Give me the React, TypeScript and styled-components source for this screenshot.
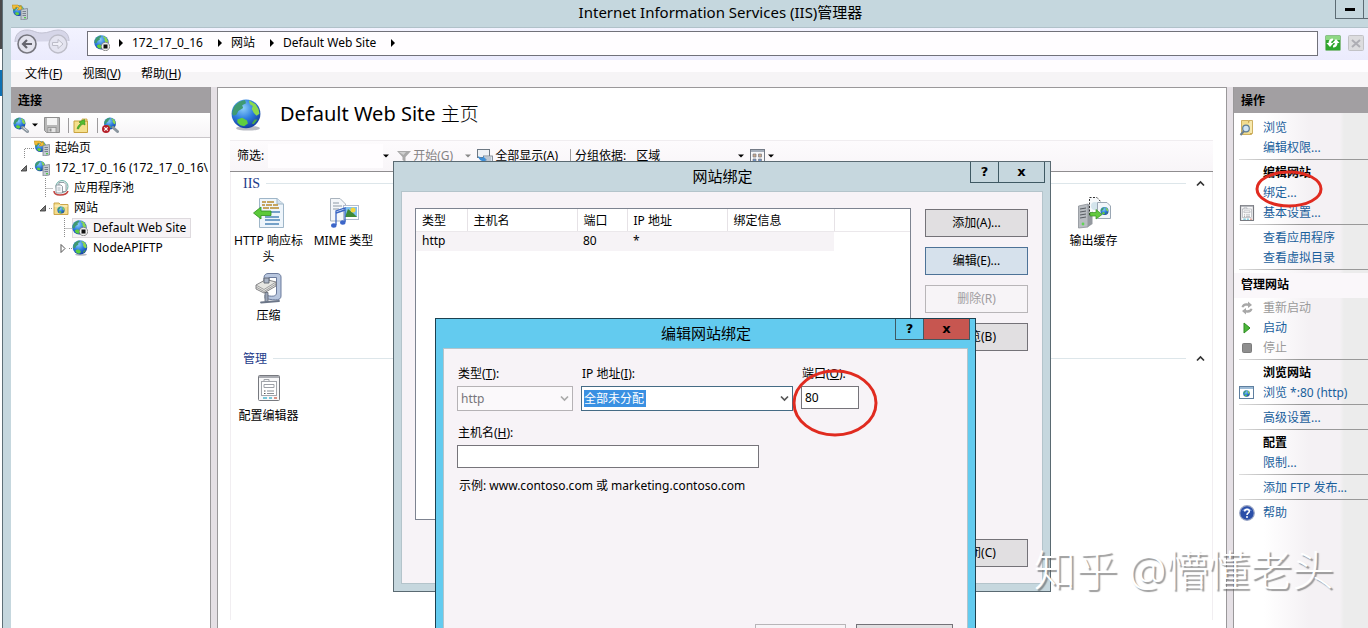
import React, { useId } from "react";
import styled, { createGlobalStyle, css } from "styled-components";

const GlobalStyle = createGlobalStyle`
  *, *::before, *::after { box-sizing: border-box; }
  body {
    margin: 0;
    overflow: hidden;
    color: #000;
    font: 12px/16px "Noto Sans", "Noto Sans CJK SC", sans-serif;
  }
  button, input, select { font: inherit; color: inherit; margin: 0; }
  a { color: #1a5f9c; text-decoration: none; }
  svg { display: block; flex: none; }
  h1, h2, h3, ul { margin: 0; padding: 0; font: inherit; }
`;

/* ---------- Icons ---------- */

function GlobeShape({ cx = 8, cy = 8, r = 7 }: { cx?: number; cy?: number; r?: number }) {
  const id = useId();
  const s = r / 15;
  return (
    <g>
      <defs>
        <radialGradient id={id} cx="0.4" cy="0.3" r="0.75">
          <stop offset="0" stopColor="#8fd0fa" />
          <stop offset="0.5" stopColor="#2f7fe0" />
          <stop offset="1" stopColor="#12389c" />
        </radialGradient>
      </defs>
      <circle cx={cx} cy={cy} r={r} fill={`url(#${id})`} />
      <g transform={`translate(${cx} ${cy}) scale(${s})`} fill="#4aa848">
        <path d="M-12-8C-9-12-5-14-1-14.5L0-11-4-9-3-6-8-3-10 1-13 2-14.5 0C-14-4-13-6-12-8Z" fill="#3f9a72" />
        <path d="M3-14 10-10 13-5 14 0 11 2 8-1 6-5 7-8 4-10Z" fill="#8ad84e" />
        <path d="M-9 6-4 4 1 7 2 10-2 13-6 12-9 9Z" fill="#5fce3e" />
        <path d="M9 6 12 6 8 11 6 10Z" />
      </g>
    </g>
  );
}

const Globe = ({ size = 16 }: { size?: number }) => (
  <svg width={size} height={size} viewBox="0 0 16 16">
    <ellipse cx="9" cy="14.6" rx="6" ry="1.2" fill="#b9bcc4" />
    <GlobeShape r={7.2} cy={7.4} />
  </svg>
);

const SiteIcon = () => (
  <svg width="16" height="16" viewBox="0 0 16 16">
    <GlobeShape r={7.2} cx={7.4} cy={7.4} />
    <circle cx="11.5" cy="11.5" r="4.2" fill="#eee" stroke="#777" strokeWidth="0.8" />
    <rect x="9.5" y="9.5" width="4" height="4" fill="#111" />
  </svg>
);

const ServerTower = () => (
  <g>
    <path d="M9 5.5 15.5 4.5V15L9 16Z" fill="#c3cad2" stroke="#7d8790" strokeWidth="0.8" />
    <path d="M10.5 7.5h3.5M10.5 9.5h3.5M10.5 11.5h3.5" stroke="#66717b" strokeWidth="0.8" />
    <rect x="12" y="13" width="2" height="1.3" fill="#54c94a" />
  </g>
);

const StartIcon = () => (
  <svg width="16" height="16" viewBox="0 0 16 16">
    <GlobeShape cx={6.5} cy={6.5} r={5.5} />
    <path d="M0 1h6l2 2 1-2 1 5-5 0 2-2-3-1-1 2H1Z" fill="#f0bd3a" stroke="#b98512" strokeWidth="0.5" />
    <ServerTower />
  </svg>
);

const ServerIcon = () => (
  <svg width="16" height="16" viewBox="0 0 16 16">
    <GlobeShape cx={6} cy={6} r={5.2} />
    <ServerTower />
  </svg>
);

const PoolIcon = () => (
  <svg width="16" height="16" viewBox="0 0 16 16">
    <circle cx="9" cy="6.5" r="6" fill="#dff0ee" stroke="#6fb0a6" />
    <path d="M6 2.5h5l2 2v7H6Z" fill="#fff" stroke="#7c8790" strokeWidth="0.8" />
    <path d="M3 5h5l1.500 1.500V13H3Z" fill="#f6f8fa" stroke="#7c8790" strokeWidth="0.8" />
    <path d="M4.500 8h3M4.500 10h3" stroke="#9aa4ac" strokeWidth="0.8" />
    <path d="M1 11c0 3 3 4 6 4s7-1 8-4" fill="none" stroke="#c0433f" strokeWidth="1.500" />
  </svg>
);

const FolderGlobe = () => (
  <svg width="16" height="16" viewBox="0 0 16 16">
    <path d="M1 3h5l1.500 1.500H15V14.500H1Z" fill="#f3dc8c" stroke="#c79e3b" strokeWidth="0.9" />
    <path d="M1.500 6h13" stroke="#fff6cf" />
    <GlobeShape cx={8} cy={10} r={3.6} />
  </svg>
);

const ConnectIcon = () => (
  <svg width="17" height="16" viewBox="0 0 17 16">
    <GlobeShape cx={6.500} cy={6.500} r={6} />
    <path d="M9.500 10.500 14.500 14.500" stroke="#8a959e" strokeWidth="3" strokeLinecap="round" />
    <path d="M10 10.500 14.500 14" stroke="#dfe5ea" strokeWidth="1" />
  </svg>
);

const DisconnectIcon = () => (
  <svg width="17" height="16" viewBox="0 0 17 16">
    <GlobeShape cx={8} cy={6.500} r={6} />
    <path d="M11 10.500 15.500 14.500" stroke="#8a959e" strokeWidth="3" strokeLinecap="round" />
    <circle cx="4" cy="12" r="4" fill="#b5202a" />
    <path d="M2.300 10.300l3.400 3.400M5.700 10.300l-3.400 3.400" stroke="#fff" strokeWidth="1.200" />
  </svg>
);

const SaveIcon = () => (
  <svg width="16" height="16" viewBox="0 0 16 16">
    <path d="M0.500 0.500h15v15h-13l-2-2Z" fill="#b8b8b8" stroke="#8f8f8f" />
    <rect x="3" y="1" width="10" height="7" fill="#f4f4f4" />
    <rect x="4" y="10.500" width="8" height="5" fill="#e4e4e4" stroke="#8f8f8f" strokeWidth="0.8" />
    <rect x="5.500" y="11.500" width="2" height="3" fill="#8f8f8f" />
  </svg>
);

const UpFolder = () => (
  <svg width="16" height="16" viewBox="0 0 16 16">
    <path d="M1 4h13.500v11.500H1Z" fill="#f5e08d" stroke="#c9a23f" />
    <path d="M9 2h5v2H9Z" fill="#f5e08d" stroke="#c9a23f" strokeWidth="0.8" />
    <path d="M4 11.500C5 9 6 7.500 8 6.500L6 5 11.500 2.500 12 8 10 7C8 8 6.500 9.500 5.500 12Z" fill="#55bd2f" stroke="#2c8a1c" strokeWidth="0.6" />
  </svg>
);

const NavArrows = () => (
  <svg width="56" height="28" viewBox="0 0 56 28">
    <path d="M1 13C1 5 6 1 13 1c7 0 8 3 15 3S38 1 44 1c7 0 11 4 11 11" fill="#d6d6e8" stroke="#c2c2d2" />
    <circle cx="13" cy="15" r="9" fill="#e4e4ee" stroke="#77777f" strokeWidth="1.600" />
    <path d="M18 15H9M13 11 9 15 13 19" fill="none" stroke="#66666e" strokeWidth="2.200" />
    <circle cx="44" cy="15" r="9" fill="#e4e4f0" stroke="#bdbdc8" strokeWidth="1.400" />
    <path d="M38.500 13.500H44V10.500L49 15 44 19.500V16.500H38.500Z" fill="#f0f0f8" stroke="#bdbdc8" />
  </svg>
);

const RefreshButtonIcon = () => (
  <svg width="16" height="16" viewBox="0 0 16 16">
    <rect x="0.500" y="0.500" width="15" height="15" rx="1" fill="#2fa62e" stroke="#8bbf8b" />
    <rect x="1" y="1" width="14" height="4" fill="#8ed884" />
    <path d="M8 3.500C5 3.500 3.500 5.500 3.500 8H1.500L5 12 8.500 8H6.200C6.200 6.500 7 5.500 8 5.500Z" fill="#fff" />
    <path d="M8 12.500C11 12.500 12.500 10.500 12.500 8H14.500L11 4 7.500 8H9.800C9.800 9.500 9 10.500 8 10.500Z" fill="#fff" />
  </svg>
);

const StopButtonIcon = () => (
  <svg width="16" height="16" viewBox="0 0 16 16">
    <rect x="0.500" y="0.500" width="15" height="15" rx="1" fill="#dcdcde" stroke="#c2c2c6" />
    <path d="M4 5 12 12M12 5 4 12" stroke="#aeaeb4" strokeWidth="2" />
  </svg>
);

const Triangle = ({ right, color = "#000" }: { right?: boolean; color?: string }) => (
  <svg width="6" height="8" viewBox="0 0 6 8">
    <path d={right ? "M1 0 5 4 1 8Z" : "M0 2.500H6L3 5.500Z"} fill={color} />
  </svg>
);

const FunnelIcon = () => (
  <svg width="14" height="14" viewBox="0 0 14 14">
    <path d="M0 2h14L8.500 8v5l-3-2V8Z" fill="#a9a9a9" />
    <path d="M2 3h7L6.500 6Z" fill="#cfcfcf" />
  </svg>
);

const ShowAllIcon = () => (
  <svg width="16" height="16" viewBox="0 0 16 16">
    <rect x="0.500" y="1.500" width="12" height="8" fill="#eef1f5" stroke="#6d7883" />
    <rect x="6.500" y="8" width="9" height="7" fill="#dfe8f2" stroke="#6d7883" strokeWidth="0.8" />
    <path d="M1 8c1 4 3 5 5 5l-1 2 5-3-4-4v2C4 10 3 9 1 8Z" fill="#3d8fd8" />
    <path d="M8 10h6M8 12h6" stroke="#8b97a5" strokeWidth="0.8" />
  </svg>
);

const ViewIcon = () => (
  <svg width="16" height="16" viewBox="0 0 16 16">
    <rect x="0.500" y="1.500" width="14" height="13" fill="#f7f7f9" stroke="#747b86" />
    <rect x="1" y="2" width="13" height="2" fill="#a5aebb" />
    <path d="M3 6h3v3H3ZM8.500 6h3v3h-3Z" fill="#c9a98d" stroke="#7d7d85" strokeWidth="0.7" />
    <path d="M3 11h3v3H3ZM8.500 11h3v3h-3Z" fill="#6f95c9" stroke="#7d7d85" strokeWidth="0.7" />
  </svg>
);

const HttpIcon = () => (
  <svg width="32" height="32" viewBox="0 0 32 32">
    <path d="M6.500 1.500H24L30.500 7V30.500H6.500Z" fill="#eef5fb" stroke="#9fb6c8" />
    <path d="M24 1.500V7H30.500" fill="#d6e2ec" stroke="#9fb6c8" />
    <path d="M9 5h4m1 0h7M9 8h3m1 0h6m1 0h5M10 11h6m1 0h9" stroke="#b98a2e" strokeWidth="1.600" />
    <path d="M16 15h11M12 20h14M12 23h15M12 27h14" stroke="#4d85b8" strokeWidth="1.300" />
    <path d="M0.500 16 8 10V14H18V18.500H8V22Z" fill="#5cc93a" stroke="#2f8f22" strokeWidth="0.8" />
  </svg>
);

const MimeIcon = () => (
  <svg width="32" height="32" viewBox="0 0 32 32">
    <path d="M2.500 1.500H12L17.500 7V24H2.500Z" fill="#f4f7fa" stroke="#a9b3bd" />
    <path d="M5 6h6M5 9h9M5 12h6" stroke="#8d9aa6" />
    <rect x="15.500" y="8.500" width="15" height="14" fill="#fff" stroke="#b3bccf" />
    <rect x="17" y="10" width="12" height="10" fill="#7fc0ee" />
    <path d="M17 20 20 12 25 16 29 20Z" fill="#3f8a36" />
    <circle cx="25" cy="13" r="2.500" fill="#f3d53c" />
    <path d="M8 28V14L17 11V25" fill="none" stroke="#3a66c4" strokeWidth="1.300" />
    <path d="M8 16 17 13" stroke="#3a66c4" strokeWidth="1.500" />
    <ellipse cx="5.800" cy="28.500" rx="2.700" ry="2.200" fill="#3c66c9" />
    <ellipse cx="14.800" cy="25.500" rx="2.700" ry="2.200" fill="#3c66c9" />
  </svg>
);

const CompressIcon = () => (
  <svg width="32" height="32" viewBox="0 0 32 32">
    <path d="M11 9V5.500C11 3 13 1.500 15 1.500H24C26.500 1.500 28 3 28 5V24C28 28 24 29 12 26.500V23C19 25 23.500 24.500 23.500 21V5.500H16V9Z" fill="#b8c6de" stroke="#5f6f92" strokeWidth="0.9" />
    <path d="M3 13 13 7.500 23 10V14L11 21 3 17Z" fill="#e6e6e2" stroke="#77777a" strokeWidth="0.9" />
    <path d="M3 13 11 17.500 23 10M3 15 11 19.500 23 12" fill="none" stroke="#8c8c8e" strokeWidth="0.8" />
    <path d="M11 6h5v5h-5Z" fill="#a9b3c4" stroke="#5f6470" strokeWidth="0.9" />
    <path d="M12 20.500h3v9h-3Z" fill="#9aa5b8" stroke="#5f6470" strokeWidth="0.8" />
    <path d="M8 30.500 26 29" stroke="#6c7688" strokeWidth="1.800" strokeLinecap="round" />
  </svg>
);

const ConfigIcon = ({ small }: { small?: boolean }) => (
  <svg width={small ? 16 : 32} height={small ? 16 : 32} viewBox={small ? "4 4 24 26" : "0 1 32 32"}>
    <rect x="5.500" y="4.500" width="21" height="25" rx="1" fill="#f8f8f9" stroke="#77797f" strokeWidth={small ? 2 : 1} />
    <path d="M6 6h20" stroke="#aaacb2" strokeWidth="2" />
    <rect x="8.500" y="10.500" width="15" height="14" fill="#fff" stroke="#a2a5ab" />
    <path d="M11 10.500V8.500h5v2" fill="none" stroke="#a2a5ab" />
    <path d="M11 13.500h10v3H11Z" fill="none" stroke="#9da0a7" />
    <path d="M14 20h7M14 22.500h7" stroke="#8b8e95" />
    <path d="M11 20h1.500M11 22.500h1.500" stroke="#555" />
    <path d="M10 27h4M16 27h3" stroke="#4cb7cf" strokeWidth="1.600" />
    <path d="M21 27h3" stroke="#d27a6a" strokeWidth="1.600" />
  </svg>
);

const CacheIcon = () => (
  <svg width="34" height="32" viewBox="0 0 34 32">
    <path d="M1.500 9 11 7V30L1.500 31Z" fill="#b9bdc2" stroke="#8c9197" strokeWidth="0.8" />
    <path d="M11 7 15.500 9V27L11 30Z" fill="#94999f" />
    <path d="M3 12l6-1M3 15l6-1M3 18l6-1M3 21l6-1" stroke="#575c62" />
    <circle cx="6" cy="27" r="1.400" fill="#5fd455" />
    <path d="M12.500 18V0.500H20L24 5" fill="#f7f9fb" stroke="#333" strokeDasharray="2 1.500" />
    <circle cx="18" cy="9" r="4" fill="#d3e4ec" />
    <path d="M20.500 5.500H30L33.500 9V21.500H20.500Z" fill="#f2f6fa" stroke="#9aa7b4" />
    <GlobeShape cx={27.500} cy={14} r={4} />
    <path d="M13 15.500h6v-3l6 5-6 4.500v-3h-6Z" fill="#63c93e" stroke="#35901f" strokeWidth="0.7" />
  </svg>
);

const Chevron = ({ up, color = "#333" }: { up?: boolean; color?: string }) => (
  <svg width="9" height="7" viewBox="0 0 9 7">
    <path d={up ? "M1 5.500 4.500 2 8 5.500" : "M1 1.500 4.500 5 8 1.500"} fill="none" stroke={color} strokeWidth="1.700" />
  </svg>
);

const BrowseIcon = () => (
  <svg width="16" height="16" viewBox="0 0 16 16">
    <path d="M2.500 0.500h7v2h3v12h-10Z" fill="#f1dc8f" stroke="#c3a045" strokeWidth="0.8" />
    <path d="M10 2.500V0.500h3.500v13H11" fill="#f7e9ae" stroke="#c3a045" strokeWidth="0.8" />
    <circle cx="7" cy="8.500" r="3.300" fill="#cfe4f4" stroke="#5c7d99" strokeWidth="1.200" />
    <path d="M5 11 1.500 15" stroke="#6c7f8e" strokeWidth="2" />
  </svg>
);

const RestartIcon = () => (
  <svg width="16" height="16" viewBox="0 0 16 16">
    <path d="M2.500 7C3 4 6 2.500 9 3.500V1.500L13 5 9 8V6C7 5.500 5 6 4.500 7.500Z" fill="#a8a8a8" />
    <path d="M13.500 9C13 12 10 13.500 7 12.500V14.500L3 11 7 8V10C9 10.500 11 10 11.500 8.500Z" fill="#a8a8a8" />
  </svg>
);

const PlayIcon = () => (
  <svg width="16" height="16" viewBox="0 0 16 16">
    <path d="M5 3 11 8 5 13Z" fill="#4cb83a" stroke="#2c8c20" />
  </svg>
);

const StopIcon = () => (
  <svg width="16" height="16" viewBox="0 0 16 16">
    <rect x="3.500" y="3.500" width="9" height="9" rx="1" fill="#8e8e8e" stroke="#7c7c7c" />
  </svg>
);

const BrowserIcon = () => (
  <svg width="16" height="16" viewBox="0 0 16 16">
    <rect x="0.500" y="1.500" width="14" height="12" fill="#fff" stroke="#5f7f9f" />
    <rect x="1" y="2" width="13" height="2" fill="#9dbbd6" />
    <GlobeShape cx={7.500} cy={8.500} r={3.300} />
  </svg>
);

const HelpIcon = () => (
  <svg width="16" height="16" viewBox="0 0 16 16">
    <circle cx="8" cy="8" r="7.300" fill="#2b4fa8" stroke="#9aa6c4" strokeWidth="1.200" />
    <path d="M3 6a5.500 4.500 0 0 1 10 0Z" fill="#6b8bd2" />
    <path d="M5.700 6.500C5.700 3.500 10.300 3.500 10.300 6.300 10.300 8 8 8 8 10" fill="none" stroke="#fff" strokeWidth="1.600" />
    <circle cx="8" cy="12" r="1" fill="#fff" />
  </svg>
);

/* ---------- Window frame ---------- */

const Desktop = styled.div`
  position: relative;
  display: flex;
  height: 100vh;
  overflow: hidden;
`;

const Backdrop = styled.div`
  width: 3px;
  border-right: 1px solid #5e6f77;
  background: linear-gradient(#4a4a4c 49px, #fff 49px, #fff 70px, #0d70b3 70px, #0d70b3 96px, #fff 96px);
`;

const Window = styled.main`
  flex: 1;
  min-width: 0;
  display: flex;
  flex-direction: column;
  padding-left: 8px;
  background: #c5d7de;
`;

const TitleBar = styled.header`
  position: relative;
  display: flex;
  align-items: flex-start;
  height: 28px;
  padding-left: 1px;
  border-bottom: 1px solid #b0c1c9;
  > svg { margin-top: 4px; }
`;

const WindowTitle = styled.h1`
  flex: 1;
  padding: 2px 0 0 78px;
  font-size: 15px;
  line-height: 20px;
  text-align: center;
`;

const Minimize = styled.button`
  width: 29px;
  height: 19px;
  padding: 8px 0 0;
  border: 1px solid #5c6b73;
  border-top: 0;
  background: none;
  display: flex;
  justify-content: center;
  &::after { content: ""; width: 10px; height: 3px; background: #000; }
`;

const CutEdge = styled.span`
  width: 4px;
  height: 19px;
  border-bottom: 1px solid #5c6b73;
`;

const NavBar = styled.nav`
  display: flex;
  align-items: center;
  height: 32px;
  padding: 0 4px 2px 3px;
  background: linear-gradient(#f3f3ff, #ebebfd);
`;

const Address = styled.div`
  flex: 1;
  display: flex;
  align-items: center;
  height: 25px;
  margin: 0 7px 0 17px;
  padding-left: 6px;
  border: 1px solid #71717a;
  background: #fffdff;
`;

const Crumb = styled.span`
  display: flex;
  align-items: center;
  gap: 14px;
  margin-left: 8px;
`;

const NavButton = styled.button`
  padding: 0;
  border: 0;
  background: none;
  margin-right: 7px;
  &:last-child { margin-right: 0; }
`;

const MenuBar = styled.div`
  display: flex;
  gap: 20px;
  height: 27px;
  padding: 6px 14px 0;
  background: linear-gradient(#fffdff 12px, #f6f4f6 12px);
`;

const MenuItem = styled.button`
  padding: 0;
  border: 0;
  background: none;
  line-height: 16px;
  height: 16px;
`;

const Columns = styled.div`
  flex: 1;
  min-height: 0;
  display: grid;
  grid-template-columns: 200px 6px minmax(0, 1fr) 6px 135px;
  background: #fff;
`;

const Splitter = styled.div`
  background: #e5e0e5;
`;

/* ---------- Left pane ---------- */

const Pane = styled.section`
  position: relative;
  min-width: 0;
  background: #fff;
  border-right: 1px solid #9a989a;
`;

const PaneTitle = styled.h2`
  height: 26px;
  padding: 6px 7px 0;
  font-weight: 700;
  background: #a29fa2;
`;

const ConnectBar = styled.div`
  display: flex;
  align-items: center;
  height: 25px;
  padding-left: 2px;
  background: linear-gradient(#fff, #f6f4f6);
  border-bottom: 1px solid #c9c6c9;
`;

const ToolButton = styled.button<{ $gap?: number }>`
  display: flex;
  align-items: center;
  gap: 2px;
  padding: 0;
  border: 0;
  background: none;
  margin-right: ${(p) => p.$gap ?? 8}px;
  &:disabled { color: #858385; }
`;

const Divider = styled.span`
  width: 1px;
  height: 15px;
  background: #9d9b9d;
  margin-right: 4px;
`;

const Tree = styled.ul`
  list-style: none;
  overflow: hidden;
`;

const TreeRow = styled.li<{ $depth: number }>`
  display: flex;
  align-items: center;
  height: 20px;
  padding-left: ${(p) => 7 + p.$depth * 19}px;
  white-space: nowrap;
`;

const TreeLabel = styled.span<{ $selected?: boolean }>`
  display: flex;
  align-items: center;
  gap: 5px;
  height: 20px;
  padding-right: 5px;
  ${(p) =>
    p.$selected &&
    css`
      background: #f6f3f6;
      box-shadow: 0 0 0 1px #dedade inset;
    `}
`;

type Joint = "first" | "open" | "closed" | "branch";

const TreeJoint = ({ kind }: { kind: Joint }) => (
  <svg width="16" height="20" viewBox="0 0 16 20">
    <g stroke="#8c8c8c" strokeDasharray="1 1" fill="none">
      {kind === "first" && <path d="M6.500 20V10.500H16" />}
      {kind === "branch" && <path d="M8.500 0V20M8.500 10.500H16" />}
      {kind === "open" && <path d="M12 10.500H16" />}
      {kind === "closed" && <path d="M13 10.500H16" />}
    </g>
    {kind === "open" && <path d="M8.500 7.500V13H3Z" fill="#777" stroke="#333" strokeWidth="0.8" />}
    {kind === "closed" && <path d="M5 6.500 9 10.500 5 14.500Z" fill="#fff" stroke="#555" />}
  </svg>
);

/* ---------- Centre pane ---------- */

const Content = styled.section`
  display: flex;
  flex-direction: column;
  min-width: 0;
  padding: 0 13px 8px 12px;
  border: solid #9a989a;
  border-width: 1px 1px 0 1px;
  background: #fff;
`;

const PageHead = styled.div`
  display: flex;
  align-items: center;
  gap: 18px;
  height: 53px;
`;

const PageTitle = styled.h2`
  padding-bottom: 2px;
  font-size: 20px;
  line-height: 24px;
`;

const PageKind = styled.span`
  font-size: 19px;
  font-weight: 300;
`;

const FilterBar = styled.div`
  display: flex;
  align-items: center;
  height: 31px;
  padding-left: 7px;
  border-bottom: 1px solid #8f8d8f;
  background: linear-gradient(#fdfbfd, #f8f5f8);
  box-shadow: 0 -1px #f0edf0;
`;

const FilterInput = styled.input`
  width: 115px;
  height: 24px;
  margin-left: 4px;
  border: 0;
  padding: 0 4px;
  background: #fffdff;
`;

const GroupSelect = styled.select`
  appearance: none;
  width: 102px;
  margin-left: 10px;
  padding: 0;
  border: 0;
  background: none;
`;

const FeatureArea = styled.div`
  flex: 1;
  border: solid #f1eef1;
  border-width: 0 1px;
  padding: 3px 0 0;
`;

const GroupHead = styled.h3<{ $serif?: boolean }>`
  display: flex;
  align-items: center;
  gap: 6px;
  height: 17px;
  padding: 0 7px 0 12px;
  color: #1e3c8a;
  font-family: ${(p) => (p.$serif ? '"Liberation Serif", serif' : "inherit")};
  font-size: ${(p) => (p.$serif ? 14 : 12)}px;
  &::after { content: ""; order: 1; flex: 1; height: 1px; background: #dde6ea; }
  svg { order: 2; margin-left: 4px; }
`;

const Features = styled.div`
  display: grid;
  grid-template-columns: repeat(12, 75px);
  grid-auto-rows: 75px;
  padding-top: 5px;
`;

const Feature = styled.button<{ $column: number }>`
  grid-column: ${(p) => p.$column};
  display: flex;
  flex-direction: column;
  align-items: center;
  gap: 4px;
  height: 70px;
  padding: 0;
  border: 0;
  background: none;
  line-height: 16px;
`;

const ManageGroup = styled.div`
  margin-top: 3px;
`;

/* ---------- Actions pane ---------- */

const Actions = styled.aside`
  min-width: 0;
  overflow: hidden;
  border-left: 1px solid #9a989a;
  background: linear-gradient(90deg, #fff 30px, #f4f1f4 75px, #f4f1f4 106px, #ececec 110px);
`;

const ActionList = styled.div`
  padding-top: 5px;
`;

const ActionRow = styled.div`
  position: relative;
  display: grid;
  grid-template-columns: 16px 1fr;
  column-gap: 8px;
  align-items: center;
  height: 20px;
  padding-left: 5px;
  white-space: nowrap;
  > a, > button, > h3 { grid-column: 2; }
`;

const ActionButton = styled.button`
  padding: 0;
  border: 0;
  background: none;
  text-align: left;
  color: #9a9a9a;
`;

const ActionHeading = styled.h3`
  font-weight: 700;
`;

const Separator = styled.div`
  height: 5px;
  margin-left: 5px;
  padding-top: 1px;
  &::after { content: ""; display: block; height: 1px; background: linear-gradient(90deg, #ddd, #999 60px); }
`;

const ActionGroupTitle = styled.h3`
  height: 25px;
  padding: 4px 7px 0;
  font-weight: 700;
  background: #faf7fa;
`;

const Ring = styled.svg<{ $x: number; $y: number }>`
  position: absolute;
  z-index: 2;
  left: ${(p) => p.$x}px;
  top: ${(p) => p.$y}px;
  pointer-events: none;
`;

const RedRing = ({ x, y, rx, ry }: { x: number; y: number; rx: number; ry: number }) => (
  <Ring $x={x} $y={y} width={rx * 2 + 4} height={ry * 2 + 4}>
    <ellipse cx={rx + 2} cy={ry + 2} rx={rx} ry={ry} fill="none" stroke="#e02b20" strokeWidth="3" />
  </Ring>
);

/* ---------- Dialogs ---------- */

const Dialog = styled.section<{ $active?: boolean; $x: number; $y: number; $w: number }>`
  position: absolute;
  left: ${(p) => p.$x}px;
  top: ${(p) => p.$y}px;
  width: ${(p) => p.$w}px;
  padding: 0 7px 7px;
  border: 1px solid ${(p) => (p.$active ? "#1d4150" : "#5a6a72")};
  background: ${(p) => (p.$active ? "#63cbef" : "#c6d7de")};
`;

const DialogTitle = styled.div`
  display: flex;
  height: 29px;
  margin-right: -1px;
`;

const DialogName = styled.h2`
  flex: 1;
  padding: 4px 0 0 74px;
  font-size: 15px;
  line-height: 20px;
  text-align: center;
`;

const CaptionButton = styled.button<{ $wide?: boolean; $red?: boolean }>`
  width: ${(p) => (p.$wide ? 47 : 29)}px;
  height: 21px;
  padding: 0;
  margin-right: -1px;
  border: 1px solid #3f5963;
  border-top: 0;
  background: ${(p) => (p.$red ? "#c75650" : "none")};
  font: 700 13px/18px "DejaVu Sans", sans-serif;
`;

const DialogBody = styled.div`
  border: 1px solid #b4c4cb;
  background: #f7f3f7;
`;

const BindingsBody = styled(DialogBody)`
  display: grid;
  grid-template-columns: minmax(0, 1fr) 103px;
  gap: 19px 14px;
  padding: 16px 14px 16px 13px;
`;

const ListBox = styled.div`
  min-height: 312px;
  border: 1px solid #7d8390;
  background: #fff;
`;

const Bindings = styled.table`
  width: 100%;
  table-layout: fixed;
  border-collapse: collapse;
  th, td {
    padding: 0 0 0 6px;
    font-weight: 400;
    text-align: left;
    overflow: hidden;
    white-space: nowrap;
  }
  th {
    height: 22px;
    padding-top: 2px;
    border-right: 1px solid #e6e2e6;
    border-bottom: 1px solid #ebe8eb;
  }
  th:last-child { border-right: 0; }
  td { height: 20px; background: #f6f3f6; }
  td:last-child { background: #fff; }
`;

const ButtonStack = styled.div`
  display: flex;
  flex-direction: column;
  gap: 10px;
  padding-top: 1px;
`;

const PushButton = styled.button<{ $tone?: "focus" }>`
  height: 28px;
  padding: 0 6px;
  border: 1px solid #747278;
  background: #e1dfe1;
  ${(p) =>
    p.$tone === "focus" &&
    css`
      border-color: #4d7297;
      background: #d6e1ec;
    `}
  &:disabled {
    border-color: #b8b5b8;
    background: #f7f4f7;
    color: #a09da0;
  }
`;

const CloseCell = styled.div`
  grid-column: 2;
  display: grid;
`;

const EditBody = styled(DialogBody)`
  display: flex;
  flex-direction: column;
  padding: 17px 13px 14px;
`;

const FieldRow = styled.div`
  display: flex;
  gap: 8px;
  margin-bottom: 14px;
`;

const Field = styled.label<{ $w: number }>`
  display: flex;
  flex-direction: column;
  gap: 4px;
  width: ${(p) => p.$w}px;
  white-space: nowrap;
  > span:first-child { padding-left: 1px; }
`;

const Combo = styled.span`
  display: grid;
  align-items: center;
  svg { grid-area: 1 / 1; justify-self: end; margin-right: 4px; pointer-events: none; }
`;

const Select = styled.select<{ $marked?: boolean }>`
  grid-area: 1 / 1;
  appearance: none;
  width: 100%;
  height: 25px;
  padding: 0 3px;
  border: 1px solid #b5b2b5;
  border-radius: 0;
  background: #fbf9fb;
  &:disabled { color: #77757a; opacity: 1; }
  ${(p) =>
    p.$marked &&
    css`
      padding: 0 2px;
      border-color: #456b85;
      color: #fff;
      background: linear-gradient(#3a90e2, #3a90e2) 2px 3px / 62px 17px no-repeat #fff;
      option { color: #000; }
    `}
`;

const TextBox = styled.input`
  width: 100%;
  height: 23px;
  padding: 0 3px;
  border: 1px solid #76747a;
  background: #fff;
`;

const Example = styled.p`
  margin: 10px 0 130px;
  padding-left: 2px;
`;

const Footer = styled.div`
  display: grid;
  grid-template-columns: 91px 97px;
  gap: 10px;
  justify-content: end;
  padding-right: 1px;
`;

const Watermark = styled.div`
  position: absolute;
  right: 34px;
  bottom: 28px;
  color: #fff;
  font-size: 42px;
  font-weight: 300;
  line-height: 60px;
  text-shadow: 2px 2px 1px rgba(90, 90, 90, 0.6);
  white-space: nowrap;
`;

/* ---------- Data ---------- */

const tree: { depth: number; joint: Joint; icon: React.ReactNode; label: string; selected?: boolean }[] = [
  { depth: 0, joint: "first", icon: <StartIcon />, label: "起始页" },
  { depth: 0, joint: "open", icon: <ServerIcon />, label: "172_17_0_16 (172_17_0_16\\" },
  { depth: 1, joint: "branch", icon: <PoolIcon />, label: "应用程序池" },
  { depth: 1, joint: "open", icon: <FolderGlobe />, label: "网站" },
  { depth: 2, joint: "branch", icon: <SiteIcon />, label: "Default Web Site", selected: true },
  { depth: 2, joint: "closed", icon: <Globe />, label: "NodeAPIFTP" },
];

const crumbs = ["172_17_0_16", "网站", "Default Web Site"];

const menus = [
  ["文件", "F"],
  ["视图", "V"],
  ["帮助", "H"],
];

const Link = ({ icon, children }: { icon?: React.ReactNode; children: React.ReactNode }) => (
  <ActionRow>
    {icon}
    <a href="#">{children}</a>
  </ActionRow>
);

const Heading = ({ children }: { children: React.ReactNode }) => (
  <ActionRow>
    <ActionHeading>{children}</ActionHeading>
  </ActionRow>
);

export default function App() {
  return (
    <Desktop>
      <GlobalStyle />
      <Backdrop />
      <Window>
        <TitleBar>
          <StartIcon />
          <WindowTitle>Internet Information Services (IIS)管理器</WindowTitle>
          <Minimize aria-label="最小化" />
          <CutEdge />
        </TitleBar>
        <NavBar>
          <NavArrows />
          <Address>
            <SiteIcon />
            <Crumb>
              <Triangle right />
            </Crumb>
            {crumbs.map((c) => (
              <Crumb key={c}>
                {c}
                <Triangle right />
              </Crumb>
            ))}
          </Address>
          <NavButton aria-label="刷新">
            <RefreshButtonIcon />
          </NavButton>
          <NavButton aria-label="停止" disabled>
            <StopButtonIcon />
          </NavButton>
        </NavBar>
        <MenuBar>
          {menus.map(([name, key]) => (
            <MenuItem key={key}>
              {name}(<u>{key}</u>)
            </MenuItem>
          ))}
        </MenuBar>

        <Columns>
          <Pane>
            <PaneTitle>连接</PaneTitle>
            <ConnectBar>
              <ToolButton $gap={6} aria-label="连接">
                <ConnectIcon />
                <Triangle />
              </ToolButton>
              <ToolButton aria-label="保存">
                <SaveIcon />
              </ToolButton>
              <Divider />
              <ToolButton aria-label="向上">
                <UpFolder />
              </ToolButton>
              <Divider />
              <ToolButton aria-label="断开">
                <DisconnectIcon />
              </ToolButton>
            </ConnectBar>
            <Tree>
              {tree.map((n) => (
                <TreeRow key={n.label} $depth={n.depth}>
                  <TreeJoint kind={n.joint} />
                  <TreeLabel $selected={n.selected}>
                    {n.icon}
                    {n.label}
                  </TreeLabel>
                </TreeRow>
              ))}
            </Tree>
          </Pane>
          <Splitter />

          <Content>
            <PageHead>
              <Globe size={32} />
              <PageTitle>
                Default Web Site <PageKind>主页</PageKind>
              </PageTitle>
            </PageHead>
            <FilterBar>
              <label htmlFor="filter">筛选:</label>
              <FilterInput id="filter" />
              <ToolButton aria-label="筛选列表">
                <Triangle />
              </ToolButton>
              <ToolButton $gap={12} disabled>
                <FunnelIcon />
                开始(G)
              </ToolButton>
              <ToolButton $gap={6} disabled aria-label="开始选项">
                <Triangle color="#888" />
              </ToolButton>
              <ToolButton $gap={12}>
                <ShowAllIcon />
                全部显示(A)
              </ToolButton>
              <Divider />
              <label htmlFor="group">分组依据:</label>
              <GroupSelect id="group">
                <option>区域</option>
              </GroupSelect>
              <ToolButton $gap={6} aria-label="分组列表">
                <Triangle />
              </ToolButton>
              <ToolButton aria-label="视图">
                <ViewIcon />
                <Triangle />
              </ToolButton>
            </FilterBar>
            <FeatureArea>
              <GroupHead $serif>
                IIS
                <Chevron up />
              </GroupHead>
              <Features>
                <Feature $column={1}>
                  <HttpIcon />
                  HTTP 响应标头
                </Feature>
                <Feature $column={2}>
                  <MimeIcon />
                  MIME 类型
                </Feature>
                <Feature $column={12}>
                  <CacheIcon />
                  输出缓存
                </Feature>
                <Feature $column={1}>
                  <CompressIcon />
                  压缩
                </Feature>
              </Features>
              <ManageGroup>
                <GroupHead>
                  管理
                  <Chevron up />
                </GroupHead>
                <Features>
                  <Feature $column={1}>
                    <ConfigIcon />
                    配置编辑器
                  </Feature>
                </Features>
              </ManageGroup>
            </FeatureArea>
          </Content>
          <Splitter />

          <Actions>
            <PaneTitle>操作</PaneTitle>
            <ActionList>
              <Link icon={<BrowseIcon />}>浏览</Link>
              <Link>编辑权限...</Link>
              <Separator />
              <Heading>编辑网站</Heading>
              <ActionRow>
                <a href="#">绑定...</a>
                <RedRing x={21} y={-13} rx={32} ry={17} />
              </ActionRow>
              <Link icon={<ConfigIcon small />}>基本设置...</Link>
              <Separator />
              <Link>查看应用程序</Link>
              <Link>查看虚拟目录</Link>
              <Separator />
              <ActionGroupTitle>管理网站</ActionGroupTitle>
              <ActionRow>
                <RestartIcon />
                <ActionButton disabled>重新启动</ActionButton>
              </ActionRow>
              <Link icon={<PlayIcon />}>启动</Link>
              <ActionRow>
                <StopIcon />
                <ActionButton disabled>停止</ActionButton>
              </ActionRow>
              <Separator />
              <Heading>浏览网站</Heading>
              <Link icon={<BrowserIcon />}>浏览 *:80 (http)</Link>
              <Separator />
              <Link>高级设置...</Link>
              <Separator />
              <Heading>配置</Heading>
              <Link>限制...</Link>
              <Separator />
              <Link>添加 FTP 发布...</Link>
              <Separator />
              <Link icon={<HelpIcon />}>帮助</Link>
            </ActionList>
          </Actions>
        </Columns>
      </Window>

      <Dialog $x={393} $y={161} $w={658}>
        <DialogTitle>
          <DialogName>网站绑定</DialogName>
          <CaptionButton aria-label="说明">?</CaptionButton>
          <CaptionButton $wide aria-label="关闭">x</CaptionButton>
        </DialogTitle>
        <BindingsBody>
          <ListBox>
            <Bindings>
              <colgroup>
                <col width="51" />
                <col width="110" />
                <col width="50" />
                <col width="100" />
                <col width="107" />
                <col />
              </colgroup>
              <thead>
                <tr>
                  <th>类型</th>
                  <th>主机名</th>
                  <th>端口</th>
                  <th>IP 地址</th>
                  <th>绑定信息</th>
                  <th />
                </tr>
              </thead>
              <tbody>
                <tr>
                  <td>http</td>
                  <td />
                  <td>80</td>
                  <td>*</td>
                  <td />
                  <td />
                </tr>
              </tbody>
            </Bindings>
          </ListBox>
          <ButtonStack>
            <PushButton>添加(A)...</PushButton>
            <PushButton $tone="focus">编辑(E)...</PushButton>
            <PushButton disabled>删除(R)</PushButton>
            <PushButton>浏览(B)</PushButton>
          </ButtonStack>
          <CloseCell>
            <PushButton>关闭(C)</PushButton>
          </CloseCell>
        </BindingsBody>
      </Dialog>

      <Dialog $active $x={435} $y={318} $w={541}>
        <DialogTitle>
          <DialogName>编辑网站绑定</DialogName>
          <CaptionButton aria-label="说明">?</CaptionButton>
          <CaptionButton $wide $red aria-label="关闭">x</CaptionButton>
        </DialogTitle>
        <EditBody>
          <FieldRow>
            <Field $w={116}>
              <span>
                类型(<u>T</u>):
              </span>
              <Combo>
                <Select disabled>
                  <option>http</option>
                </Select>
                <Chevron color="#aaa" />
              </Combo>
            </Field>
            <Field $w={212}>
              <span>
                IP 地址(<u>I</u>):
              </span>
              <Combo>
                <Select $marked>
                  <option>全部未分配</option>
                </Select>
                <Chevron color="#555" />
              </Combo>
            </Field>
            <Field $w={58}>
              <span>
                端口(<u>O</u>):
              </span>
              <TextBox defaultValue="80" />
            </Field>
          </FieldRow>
          <Field $w={302}>
            <span>
              主机名(<u>H</u>):
            </span>
            <TextBox />
          </Field>
          <Example>示例: www.contoso.com 或 marketing.contoso.com</Example>
          <Footer>
            <PushButton disabled aria-label="确定" />
            <PushButton aria-label="取消" />
          </Footer>
        </EditBody>
        <RedRing x={356} y={50} rx={41} ry={32} />
      </Dialog>

      <Watermark>知乎 @懵懂老头</Watermark>
    </Desktop>
  );
}
